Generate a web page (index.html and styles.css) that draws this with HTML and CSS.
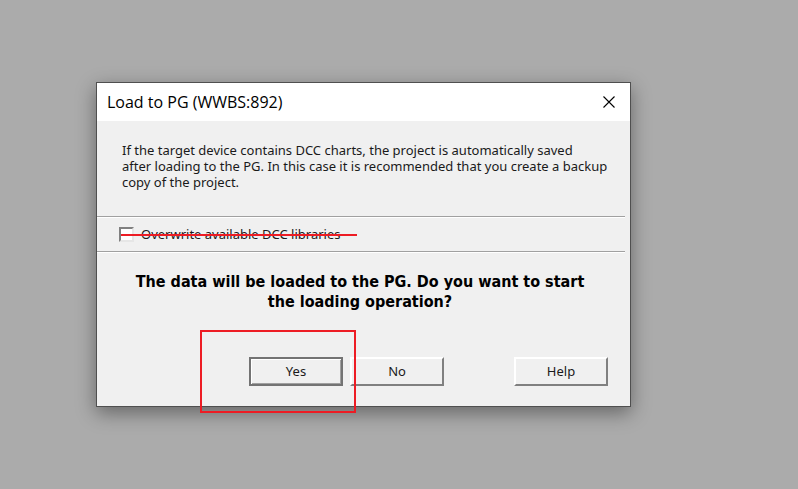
FILE: index.html
```html
<!DOCTYPE html>
<html lang="en">
<head>
<meta charset="utf-8">
<title>Load to PG</title>
<link rel="stylesheet" href="styles.css">
</head>
<body>
<main class="dialog" role="dialog" aria-labelledby="title">
  <header class="titlebar">
    <h1 class="title" id="title">Load to PG (WWBS:892)</h1>
    <button class="close" type="button" aria-label="Close">
      <svg width="12" height="12" viewBox="0 0 12 12" aria-hidden="true"><path d="M0.5 0.5L11.5 11.5M11.5 0.5L0.5 11.5" fill="none" stroke="#000" stroke-width="1.1"/></svg>
    </button>
  </header>
  <p class="notice">If the target device contains DCC charts, the project is automatically saved<br>after loading to the PG. In this case it is recommended that you create a backup<br>copy of the project.</p>
  <div class="option">
    <label class="option-label"><input class="check" type="checkbox">Overwrite available DCC libraries</label>
    <span class="strike"></span>
  </div>
  <p class="question">The data will be loaded to the PG. Do you want to start<br>the loading operation?</p>
  <footer class="actions">
    <button class="button button-default" type="button">Yes</button>
    <button class="button" type="button">No</button>
    <button class="button button-help" type="button">Help</button>
    <span class="highlight"></span>
  </footer>
</main>
</body>
</html>
```
FILE: styles.css
```css
* {
  box-sizing: border-box;
}

body {
  margin: 0;
  padding: 82px 167px 82px 96px;
  background: #ababab;
  color: #1a1a1a;
  font-family: "Noto Sans", sans-serif;
  font-size: 13px;
  line-height: 16px;
}

.dialog {
  border: 1px solid #4f4f4f;
  background: #f0f0f0;
  box-shadow: 0 6px 18px rgba(0, 0, 0, 0.4);
}

.titlebar {
  display: flex;
  align-items: center;
  justify-content: space-between;
  height: 38px;
  padding: 0 15px 0 10px;
  background: #fff;
}

.title {
  margin: 0;
  color: #000;
  font-family: "Open Sans", sans-serif;
  font-size: 16px;
  font-weight: 400;
  line-height: 20px;
}

.close {
  display: flex;
  padding: 0;
  border: 0;
  background: none;
}

.notice {
  margin: 0;
  padding: 21px 20px 26px 25px;
  white-space: nowrap;
}

.option {
  position: relative;
  margin-right: 5px;
  padding: 8px 22px;
  border-top: 1px solid #a0a0a0;
  border-bottom: 1px solid #a0a0a0;
  box-shadow: inset 0 1px #fff, 0 1px #fff;
}

.option-label {
  display: flex;
  align-items: center;
  gap: 7px;
  height: 18px;
}

.check {
  appearance: none;
  width: 15px;
  height: 15px;
  margin: 0;
  border: 2px solid;
  border-color: #808080 #e6e6e6 #e6e6e6 #808080;
  background: #fff;
}

.strike {
  position: absolute;
  top: 17px;
  left: 24px;
  width: 236px;
  height: 2px;
  background: #ed1c24;
}

.question {
  margin: 0;
  padding: 20px 7px 0 0;
  color: #000;
  font-family: "DejaVu Sans Condensed", "Noto Sans", sans-serif;
  font-size: 16px;
  font-weight: 700;
  line-height: 20px;
  text-align: center;
}

.actions {
  position: relative;
  display: flex;
  align-items: flex-start;
  gap: 7px;
  padding: 45px 22px 20px 152px;
}

.button {
  width: 94px;
  height: 29px;
  padding: 0 0 2px;
  border: 2px solid;
  border-color: #fff #808080 #808080 #fff;
  background: #f0f0f0;
  color: #1a1a1a;
  font: inherit;
}

.button-default {
  border-color: #737373;
  box-shadow: inset 1px 1px #fff, inset -1px -1px #a0a0a0;
}

.button-help {
  margin-left: auto;
}

.highlight {
  position: absolute;
  top: 18px;
  left: 103px;
  width: 156px;
  height: 83px;
  border: 2px solid #ed1c24;
}
```
